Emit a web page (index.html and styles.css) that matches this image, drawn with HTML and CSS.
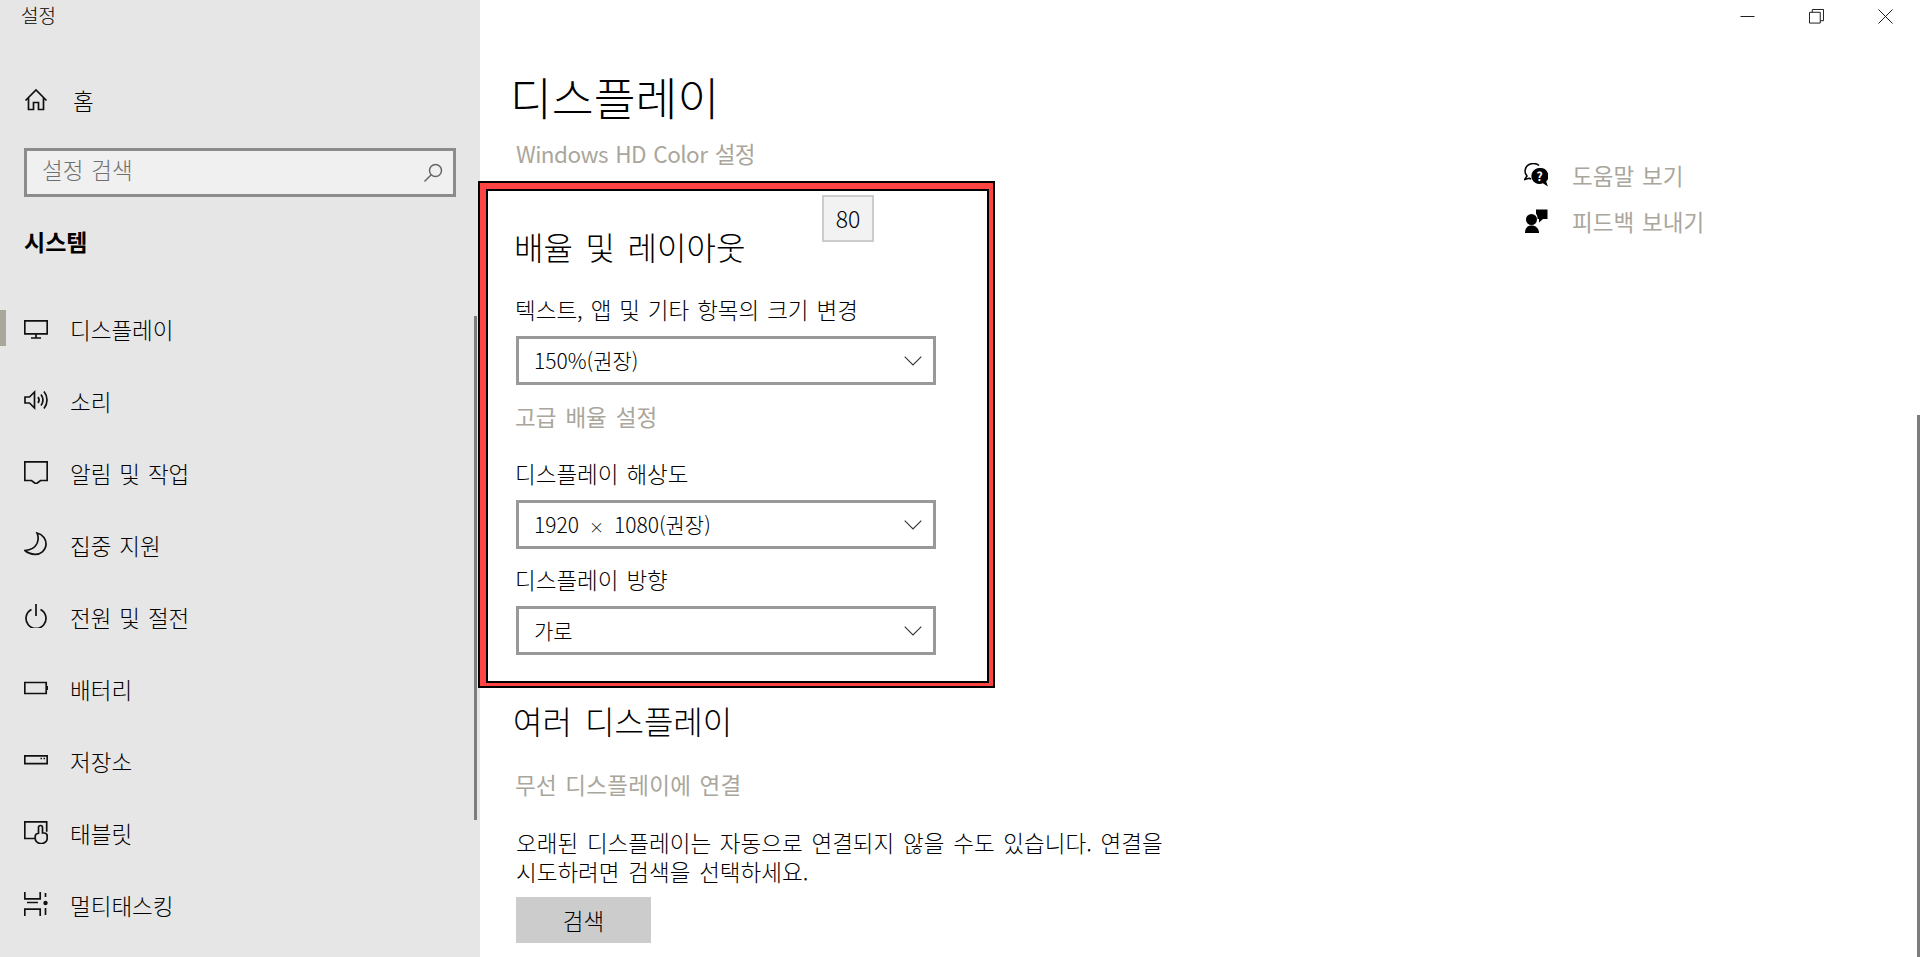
FILE: index.html
```html
<!DOCTYPE html>
<html lang="ko">
<head>
<meta charset="utf-8">
<title>설정</title>
<link rel="stylesheet" href="styles.css">
</head>
<body>
<div class="window">
  <aside class="sidebar">
    <div class="app-title">설정</div>
    <a class="home">
      <svg class="icon" viewBox="0 0 24 24"><path d="M1.500 12.500 12 2l10.500 10.500M4.500 10v11.500h5v-7h5v7h5V10"/></svg>
      <span class="home-label">홈</span>
    </a>
    <div class="search">
      <span class="search-text">설정 검색</span>
      <svg class="search-icon" viewBox="0 0 20 20"><circle cx="12.500" cy="7.500" r="6"/><path d="M8.200 11.800 1.500 18.500"/></svg>
    </div>
    <div class="group-title">시스템</div>
    <nav class="nav">
      <a class="nav-item active">
        <svg class="icon" viewBox="0 0 24 24"><path d="M.8 4.800h22.400v13H.8zM12 18v3.500M7 22h10"/></svg>
        <span>디스플레이</span>
      </a>
      <a class="nav-item">
        <svg class="icon" viewBox="0 0 24 24"><path d="M1 9h4.500L10.500 4v16L5.500 15H1zM14 9c1.500 2 1.500 4 0 6M17 6.500c2.500 3.500 2.500 7.500 0 11M20 3.500c4 5 4 12 0 17"/></svg>
        <span>소리</span>
      </a>
      <a class="nav-item">
        <svg class="icon" viewBox="0 0 24 24"><path d="M.8 1.800h22.400v18.700h-6.700L12 24l-4.500-3.500H.8z"/></svg>
        <span>알림 및 작업</span>
      </a>
      <a class="nav-item">
        <svg class="icon" viewBox="0 0 24 24"><path d="M13 1c6 1.500 9.500 6.500 9 12-.5 5.500-5.500 9.500-11 9.300-4-.2-7.500-1.500-10-3.800 6-.5 10-2.800 12-7 1.500-3.500 1.500-7 0-10.500z"/></svg>
        <span>집중 지원</span>
      </a>
      <a class="nav-item">
        <svg class="icon" viewBox="0 0 24 24"><path d="M7.500 5.500a10 10 0 1 0 9 0M12 0v12"/></svg>
        <span>전원 및 절전</span>
      </a>
      <a class="nav-item">
        <svg class="icon" viewBox="0 0 24 24"><path d="M.8 6.500h21.400v11H.8zM23.200 10v4"/></svg>
        <span>배터리</span>
      </a>
      <a class="nav-item">
        <svg class="icon" viewBox="0 0 24 24"><path d="M.8 7.800h22.400v7.900H.8zM16.500 10.500h1.500M19.500 10.500h1.500"/></svg>
        <span>저장소</span>
      </a>
      <a class="nav-item">
        <svg class="icon" viewBox="0 0 24 24"><path d="M11 18.500H.8V1.800h21.900v10M14.500 14V7.500a2 2 0 0 1 4 0V13h1.500a3.200 3.200 0 0 1 3.200 3.200v2a5.300 5.300 0 0 1-5.300 5.300h-1.400a5.300 5.300 0 0 1-5.300-5.300v-1.700a3 3 0 0 1 3-3"/></svg>
        <span>태블릿</span>
      </a>
      <a class="nav-item">
        <svg class="icon" viewBox="0 0 24 24"><path d="M.8 0v6.800h15.400V0M3 10.500h11M.8 24v-6.800h15.400V24M21.500 1v4M21.500 16v7"/><circle class="dot" cx="21.500" cy="11" r="2.200"/></svg>
        <span>멀티태스킹</span>
      </a>
    </nav>
    <div class="nav-scroll"></div>
  </aside>

  <main class="main">
    <div class="controls">
      <svg class="ctl" viewBox="0 0 16 16"><path d="M.5 8h15"/></svg>
      <svg class="ctl" viewBox="0 0 16 16"><path d="M.5 3.500h11.500v11.500H.5zM3.500 3.500V.5h12v12H12"/></svg>
      <svg class="ctl" viewBox="0 0 16 16"><path d="m.5.500 15 15M15.500.500l-15 15"/></svg>
    </div>
    <div class="body">
      <div class="content">
        <h1 class="page-title">디스플레이</h1>
        <a class="link hd-link">Windows HD Color 설정</a>
        <section class="highlight">
          <span class="badge">80</span>
          <h2 class="heading scale-heading">배율 및 레이아웃</h2>
          <div class="label first-label">텍스트, 앱 및 기타 항목의 크기 변경</div>
          <div class="select"><span>150%(권장)</span><svg class="chev" viewBox="0 0 18 10"><path d="m.7.700 8.300 8.300L17.300.700"/></svg></div>
          <a class="link adv-link">고급 배율 설정</a>
          <div class="label res-label">디스플레이 해상도</div>
          <div class="select"><span>1920<span class="times">×</span>1080(권장)</span><svg class="chev" viewBox="0 0 18 10"><path d="m.7.700 8.300 8.300L17.300.700"/></svg></div>
          <div class="label ori-label">디스플레이 방향</div>
          <div class="select"><span>가로</span><svg class="chev" viewBox="0 0 18 10"><path d="m.7.700 8.300 8.300L17.300.700"/></svg></div>
        </section>
        <h2 class="heading multi-heading">여러 디스플레이</h2>
        <a class="link wireless-link">무선 디스플레이에 연결</a>
        <p class="para">오래된 디스플레이는 자동으로 연결되지 않을 수도 있습니다. 연결을 시도하려면 검색을 선택하세요.</p>
        <button class="btn">검색</button>
      </div>
      <div class="help">
        <a class="help-item">
          <svg class="help-icon" viewBox="0 0 24 24"><path class="outline" d="M15 2.500C13.500 1 11.500.5 9.500.5 4.500.5 1 3.800 1 8c0 2 .8 3.700 2 5L.5 16.500 5 15.300c.8.300 1.500.5 2.200.6"/><path class="fill" d="M15.500 5a8 8 0 0 0-7.300 11.500C9.500 19.300 12.300 21 15.500 21c1.200 0 2.400-.3 3.400-.7l5 3.200-1.700-5A8 8 0 0 0 15.500 5z"/><text class="q" x="15.500" y="18">?</text></svg>
          <span>도움말 보기</span>
        </a>
        <a class="help-item">
          <svg class="help-icon" viewBox="0 0 24 24"><circle class="fill" cx="7.500" cy="10.500" r="5.500"/><path class="fill" d="M1 24c0-5 2.500-7.500 6.500-7.500S15 19 15 24z"/><path class="fill" d="M12 .5h11.500v9.500H19l-4 3.500V10h-1.500c.2-2.500-.5-4-1.500-5z"/></svg>
          <span>피드백 보내기</span>
        </a>
      </div>
    </div>
    <div class="main-scroll"></div>
  </main>
</div>
</body>
</html>
```
FILE: styles.css
```css
* { box-sizing: border-box; }
html, body { margin: 0; height: 100%; overflow: hidden; }
body { font-family: "Noto Sans CJK KR", "Noto Sans", sans-serif; font-weight: 300; word-spacing: .1em; color: #000; background: #fff; }
a { display: block; }
svg { fill: none; stroke: #111; flex: none; }

.window { display: flex; height: 957px; overflow: hidden; }

.sidebar { position: relative; width: 480px; flex: none; background: #e6e6e6; padding: 0 24px; }
.app-title { font-size: 19px; line-height: 24px; padding-top: 3px; margin-left: -3px; height: 83px; }
.home { display: flex; align-items: center; height: 33px; }
.home-label { font-size: 22.5px; margin-left: 25px; }
.icon { width: 24px; height: 24px; stroke-width: 1.700; }
.icon .dot { fill: #111; stroke: none; }

.search { display: flex; align-items: center; justify-content: space-between; height: 49px; margin-top: 32px; border: 3px solid #8c8c8c; background: #f0f0f0; padding: 0 10px 0 15px; }
.search-text { font-size: 22.5px; color: #6f6f6f; padding-bottom: 7px; }
.search-icon { width: 20px; height: 20px; stroke: #666; stroke-width: 1.500; }

.group-title { font-size: 23px; font-weight: 700; line-height: 30px; margin-top: 29px; }

.nav { margin: 36px 0 0 -24px; }
.nav-item { position: relative; display: flex; align-items: center; height: 72px; padding-left: 24px; font-size: 22.5px; }
.nav-item span { margin-left: 22px; padding-top: 2px; }
.nav-item.active::before { content: ""; position: absolute; left: 0; top: 18px; width: 6px; height: 36px; background: #aaa69b; }
.nav-scroll { position: absolute; left: 474px; top: 316px; width: 3px; height: 504px; background: #7d7d7d; }

.main { position: relative; flex: 1; min-width: 0; display: flex; flex-direction: column; }
.controls { display: flex; justify-content: flex-end; gap: 54px; padding: 9px 27px 0 0; height: 34px; }
.ctl { width: 15px; height: 15px; stroke-width: 1; }

.body { display: flex; }
.content { width: 1044px; padding-left: 33px; flex: none; }
.page-title { font-size: 45.5px; font-weight: 300; line-height: 60px; margin: 32px 0 0 -3px; }
.link { color: #aaa69b; font-size: 22.5px; font-weight: 400; line-height: 30px; }
.hd-link { margin: 12px 0 0 3px; letter-spacing: -.55px; }

.highlight { position: relative; width: 513px; height: 503px; margin: 15px 0 0 -33px; padding: 37px 0 0 28px; border-style: solid; border-color: #f44; border-width: 6px 4px 3px 6px; box-shadow: 0 0 0 2px #000, inset 0 0 0 2px #000; background: #fff; }
.badge { position: absolute; left: 336px; top: 6px; width: 52px; height: 47px; display: flex; align-items: center; justify-content: center; border: 2px solid #ccc; background: #f2f2f2; font-size: 23px; padding-bottom: 2px; }
.heading { font-size: 32px; font-weight: 300; word-spacing: .13em; line-height: 40px; margin: 0; }
.scale-heading { word-spacing: .115em; }
.label { font-size: 22.5px; line-height: 30px; margin-left: 1px; }
.first-label { margin-top: 28px; }
.res-label { margin-top: 27px; }
.ori-label { margin-top: 15px; }
.select { display: flex; align-items: center; justify-content: space-between; width: 420px; height: 49px; margin: 12px 0 0 2px; border: 3px solid #999; padding: 0 11px 0 15px; font-size: 21px; word-spacing: 0; background: #fff; }
.select > span { padding-bottom: 2px; }
.times { font-size: 15px; margin: 0 10px; }
.chev { width: 18px; height: 10px; stroke: #333; stroke-width: 1.100; }
.adv-link { margin: 16px 0 0 1px; word-spacing: .12em; }

.multi-heading { margin-top: 14px; }
.wireless-link { margin: 29px 0 0 2px; letter-spacing: .3px; }
.para { font-size: 22.5px; word-spacing: .11em; line-height: 29px; width: 660px; margin: 29px 0 0 3px; }
.btn { display: block; width: 135px; height: 46px; margin: 11px 0 0 3px; border: 0; background: #ccc; font: inherit; font-size: 22.5px; color: #000; padding: 0; }

.help { margin-left: 0; padding-top: 118px; }
.help-item { display: flex; align-items: center; height: 46px; color: #aaa69b; font-size: 22.5px; font-weight: 400; }
.help-item span { margin-left: 24px; }
.help-icon { width: 24px; height: 24px; stroke-width: 1.500; }
.help-icon .fill { fill: #000; stroke: none; }
.help-icon .outline { stroke: #000; }
.help-icon .q { fill: #fff; stroke: none; font-size: 12px; font-weight: 700; text-anchor: middle; }

.main-scroll { position: absolute; right: 0; top: 415px; bottom: 0; width: 3px; background: #7d7d7d; }
```
